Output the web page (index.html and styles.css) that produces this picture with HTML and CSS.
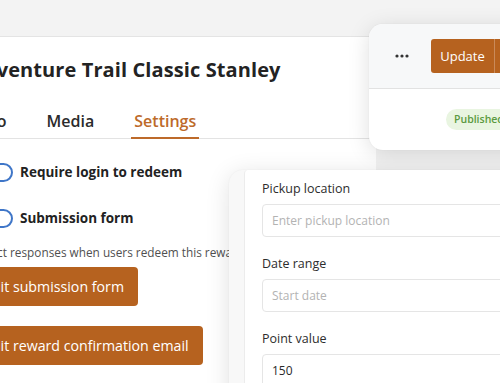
FILE: index.html
```html
<!DOCTYPE html>
<html>
<head>
<meta charset="utf-8">
<link rel="stylesheet" href="styles.css">
</head>
<body>
<div class="stage">
  <div class="main-card">
    <h1 class="title">Adventure Trail Classic Stanley</h1>
    <nav class="tabs">
      <span class="tab">Info</span>
      <span class="tab">Media</span>
      <span class="tab active">Settings</span>
    </nav>
    <div class="settings">
      <label class="toggle-row"><span class="toggle"></span><span class="toggle-label">Require login to redeem</span></label>
      <label class="toggle-row second"><span class="toggle"></span><span class="toggle-label">Submission form</span></label>
      <p class="desc">Collect responses when users redeem this reward.</p>
      <button class="btn">Edit submission form</button>
      <button class="btn">Edit reward confirmation email</button>
    </div>
  </div>

  <div class="action-card">
    <div class="action-head">
      <svg class="dots" width="14" height="4" viewBox="0 0 14 4"><circle cx="2" cy="2" r="1.6"/><circle cx="7" cy="2" r="1.6"/><circle cx="12" cy="2" r="1.6"/></svg>
      <div class="split">
        <button class="split-main">Update</button>
        <button class="split-caret"></button>
      </div>
    </div>
    <div class="action-body">
      <span class="badge">Published</span>
    </div>
  </div>

  <div class="form-card">
    <div class="form-panel">
      <div class="field">
        <div class="field-label">Pickup location</div>
        <div class="input placeholder">Enter pickup location</div>
      </div>
      <div class="field">
        <div class="field-label">Date range</div>
        <div class="input placeholder">Start date</div>
      </div>
      <div class="field">
        <div class="field-label">Point value</div>
        <div class="input">150</div>
      </div>
    </div>
  </div>
</div>
</body>
</html>
```

FILE: styles.css
```css
* { box-sizing: border-box; }
html, body {
  margin: 0;
  padding: 0;
  width: 500px;
  height: 383px;
  overflow: hidden;
  background: #f3f3f3;
  font-family: "Open Sans", "Noto Sans", sans-serif;
  color: #262626;
}
.stage {
  position: relative;
  width: 500px;
  height: 383px;
  overflow: hidden;
  padding-top: 36px;
}
.main-card {
  margin-left: -54px;
  width: 430px;
  height: 400px;
  background: #fff;
  border-top: 1px solid #e4e4e4;
  padding: 19px 0 0 24px;
}
.title {
  margin: 0;
  font-size: 20px;
  line-height: 28px;
  font-weight: 700;
  color: #232323;
  letter-spacing: 0.1px;
  white-space: nowrap;
}
.tabs {
  display: flex;
  gap: 34px;
  margin-top: 25px;
  padding-left: 3px;
  border-bottom: 1px solid #e3e3e3;
}
.tab {
  font-size: 16px;
  line-height: 24px;
  font-weight: 600;
  color: #2b2b2b;
  padding: 0 3px 4px;
  border-bottom: 2px solid transparent;
  margin-bottom: -1px;
}
.tab.active {
  color: #bd6a2a;
  border-bottom-color: #bd6a2a;
}
.settings {
  display: flex;
  flex-direction: column;
  align-items: flex-start;
  padding-top: 23px;
}
.toggle-row {
  display: flex;
  align-items: center;
  gap: 7px;
  height: 20px;
  margin-left: 6px;
}
.toggle-row.second { margin-top: 26px; }
.toggle {
  width: 37px;
  height: 19px;
  border: 2px solid #3f76c8;
  border-radius: 10px;
  background: #fff;
}
.toggle-label {
  font-size: 13.5px;
  font-weight: 700;
  color: #222;
  white-space: nowrap;
}
.desc {
  margin: 15px 0 0;
  font-size: 11.8px;
  line-height: 18px;
  color: #505050;
  white-space: nowrap;
}
.btn {
  margin-top: 6px;
  height: 39px;
  padding: 0 14px;
  border: none;
  border-radius: 4px;
  background: #b6621f;
  color: #fff;
  font-family: inherit;
  font-size: 14.2px;
  font-weight: 500;
  white-space: nowrap;
}
.btn + .btn { margin-top: 20px; }

.action-card {
  position: absolute;
  left: 369px;
  top: 24px;
  width: 180px;
  height: 126px;
  background: #fff;
  border-radius: 14px;
  box-shadow: 0 4px 22px rgba(0,0,0,0.13), 0 0 2px rgba(0,0,0,0.06);
  overflow: hidden;
}
.action-head {
  height: 65px;
  background: #f7f8f9;
  border-bottom: 1px solid #e2e2e2;
  display: flex;
  align-items: center;
  padding-left: 26px;
}
.dots {
  fill: #333;
  margin-right: 22px;
}
.split {
  display: flex;
  height: 34px;
}
.split-main {
  width: 63px;
  height: 34px;
  border: none;
  background: #b6621f;
  color: #fff;
  font-family: inherit;
  font-size: 13px;
  font-weight: 500;
  border-radius: 3px 0 0 3px;
  padding: 0;
}
.split-caret {
  width: 30px;
  height: 34px;
  border: none;
  border-left: 1px solid #c98a5a;
  background: #b6621f;
  border-radius: 0 3px 3px 0;
}
.action-body {
  padding: 17px 0 0 77px;
}
.badge {
  display: inline-block;
  background: #e9f5e1;
  color: #5b9a40;
  font-size: 10.5px;
  font-weight: 600;
  line-height: 21px;
  padding: 0 8px;
  border-radius: 11px;
  white-space: nowrap;
}

.form-card {
  position: absolute;
  left: 229px;
  top: 170px;
  width: 320px;
  height: 260px;
  background: #f8f8f8;
  border-radius: 14px;
  box-shadow: 0 4px 24px rgba(0,0,0,0.12), 0 0 2px rgba(0,0,0,0.05);
  padding-left: 15px;
}
.form-panel {
  height: 100%;
  background: #fff;
  border-left: 1px solid #ececec;
  border-top-left-radius: 4px;
  padding: 9px 0 0 17px;
}
.field + .field { margin-top: 17px; }
.field-label {
  font-size: 12.5px;
  line-height: 20px;
  font-weight: 500;
  color: #2d2d2d;
}
.input {
  margin-top: 5px;
  height: 33px;
  border: 1px solid #e5e5e5;
  border-radius: 4px;
  padding-left: 9px;
  font-size: 12px;
  line-height: 31px;
  color: #2a2a2a;
}
.input.placeholder { color: #b3b3b3; }
```
